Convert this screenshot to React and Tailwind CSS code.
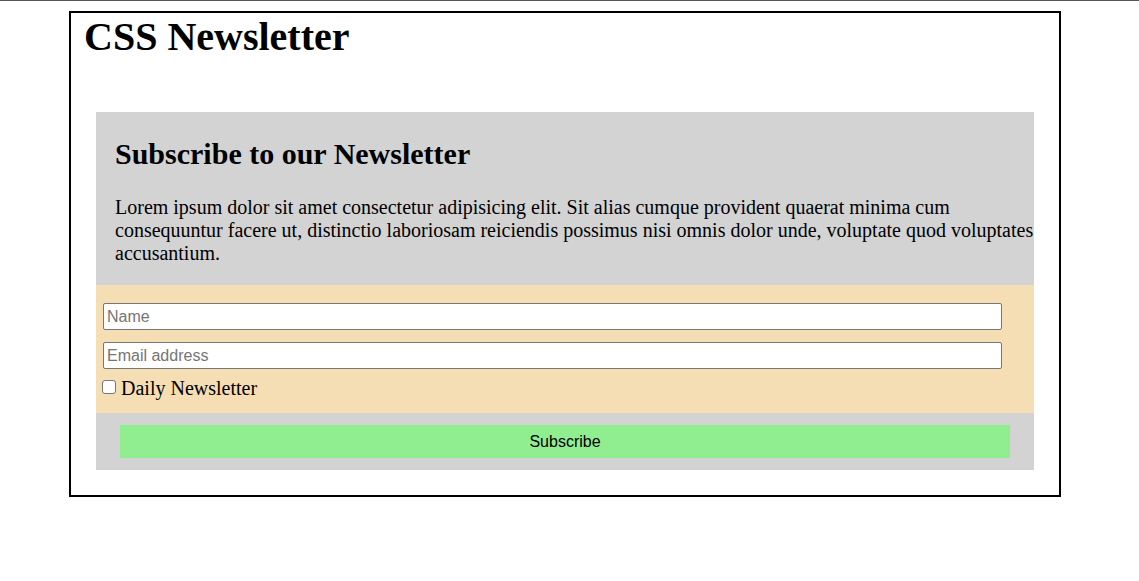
export default function App() {
  const serif = { fontFamily: '"Liberation Serif", "Times New Roman", serif' };
  const sans = { fontFamily: '"Liberation Sans", Arial, sans-serif' };
  return (
    <div className="w-[1139px] h-[581px] bg-white overflow-hidden" style={serif}>
      <div className="h-px bg-[#555]" />
      <div className="pt-[10px] pl-[69px]">
        <div className="w-[992px] h-[486px] border-2 border-black">
          <h1 className="pl-[13px] pt-[1px] text-[40px] leading-[46px] font-bold text-black">CSS Newsletter</h1>
          <div className="ml-[25px] mt-[52px] w-[938px] bg-[#d3d3d3]">
            <div className="pl-[19px] pt-[25px] pb-[20px]">
              <h2 className="text-[30px] leading-[34px] font-bold text-black">Subscribe to our Newsletter</h2>
              <p className="mt-[25px] text-[20px] leading-[23px] text-black whitespace-nowrap">
                Lorem ipsum dolor sit amet consectetur adipisicing elit. Sit alias cumque provident quaerat minima cum<br />
                consequuntur facere ut, distinctio laboriosam reiciendis possimus nisi omnis dolor unde, voluptate quod voluptates<br />
                accusantium.
              </p>
            </div>
            <div className="bg-[#f5deb3] pl-[7px] pt-[18px] pb-[13px] flex flex-col">
              <input
                type="text"
                placeholder="Name"
                className="w-[899px] h-[27px] border border-[#767676] rounded-[2px] bg-white px-[3px] text-[16px] placeholder:text-[#757575] outline-none"
                style={sans}
              />
              <input
                type="text"
                placeholder="Email address"
                className="mt-[12px] w-[899px] h-[27px] border border-[#767676] rounded-[2px] bg-white px-[3px] text-[16px] placeholder:text-[#757575] outline-none"
                style={sans}
              />
              <label className="mt-[8px] flex items-center text-[20px] leading-[23px] text-black">
                <input
                  type="checkbox"
                  className="appearance-none w-[14px] h-[14px] m-0 ml-[-1px] mr-[5px] mb-[3px] bg-white border border-[#767676] rounded-[3px]"
                />
                Daily Newsletter
              </label>
            </div>
            <div className="px-[24px] pt-[12px] pb-[12px]">
              <button
                className="block w-[890px] h-[33px] bg-[#90ee90] text-[16px] text-black text-center"
                style={sans}
              >
                Subscribe
              </button>
            </div>
          </div>
        </div>
      </div>
    </div>
  );
}
